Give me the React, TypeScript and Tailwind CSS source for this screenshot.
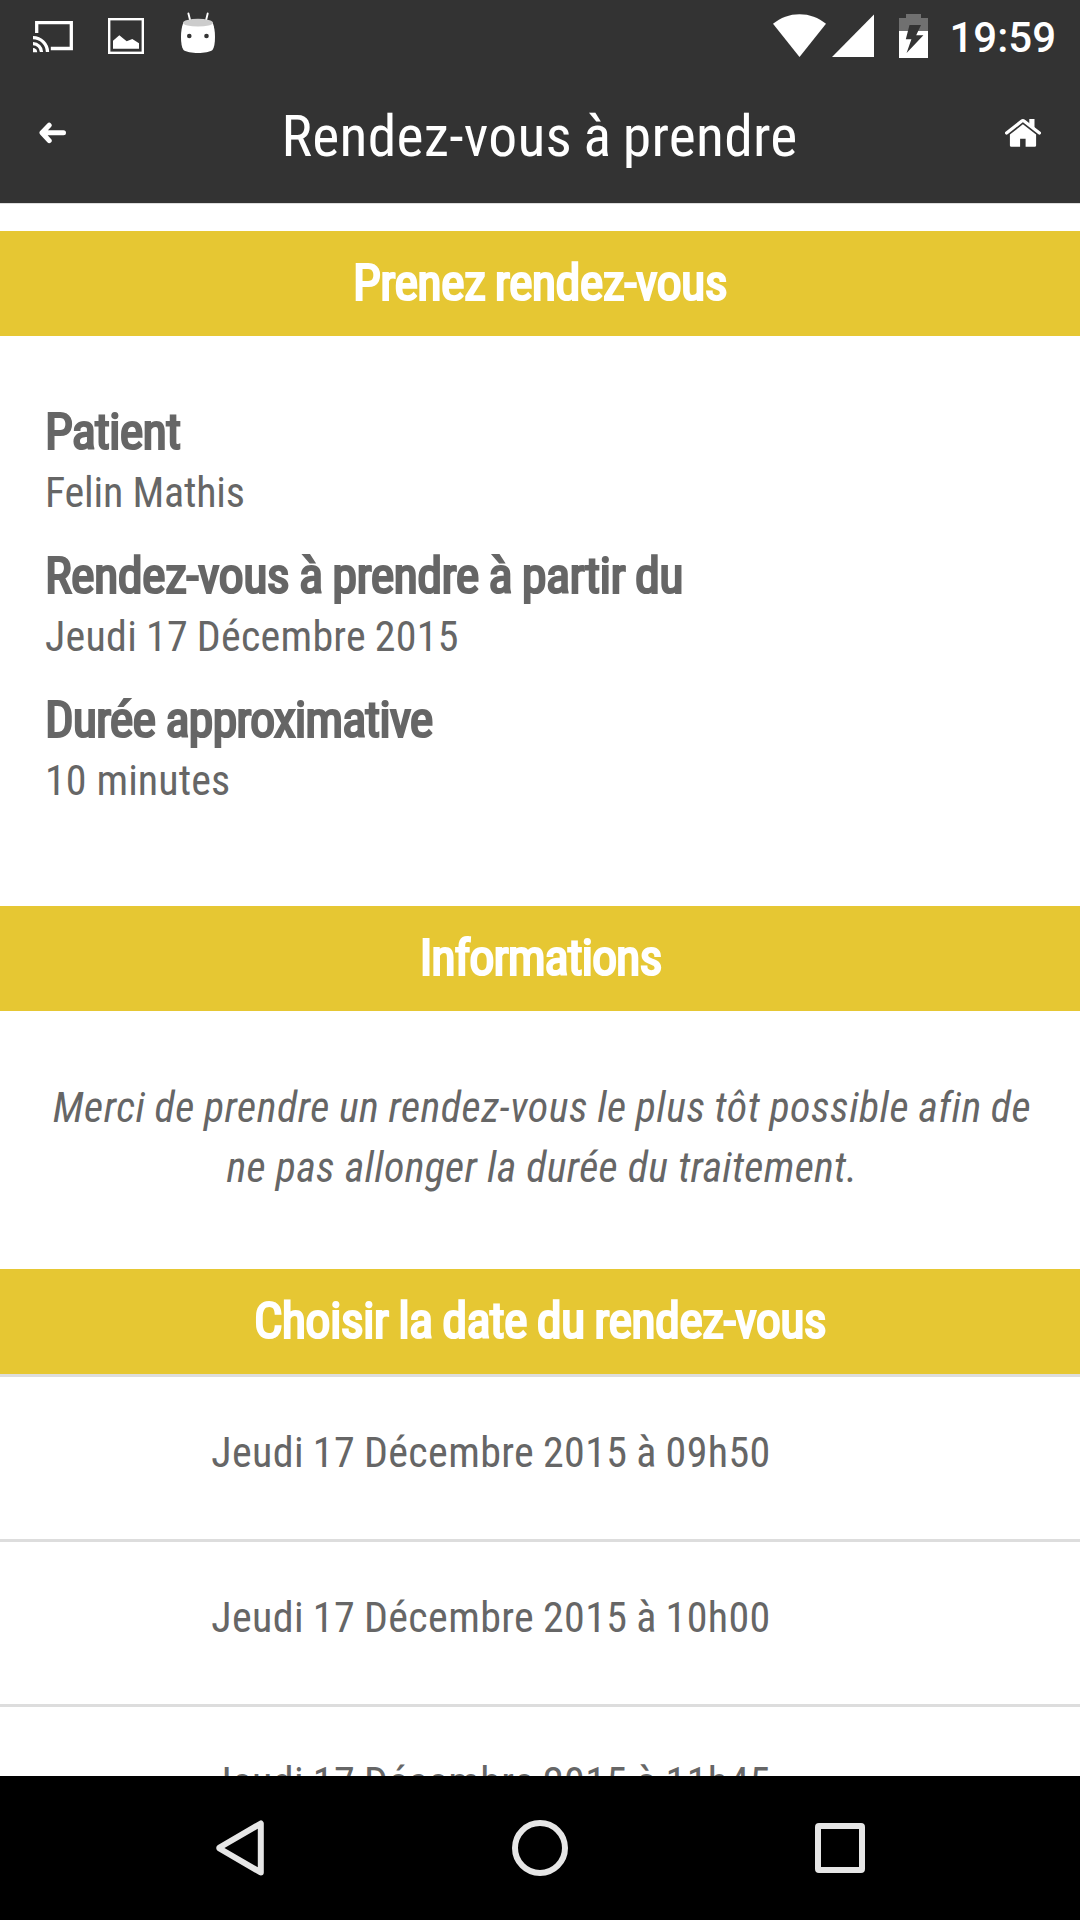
const details = [
  {
    label: "Patient",
    value: "Felin Mathis",
    labelSpacing: "tracking-[-0.86px]",
    valueSpacing: "tracking-[-0.2px]",
  },
  {
    label: "Rendez-vous à prendre à partir du",
    value: "Jeudi 17 Décembre 2015",
    labelSpacing: "tracking-[-0.7px] [word-spacing:-1px]",
    valueSpacing: "tracking-[0.25px] [word-spacing:-1px]",
  },
  {
    label: "Durée approximative",
    value: "10 minutes",
    labelSpacing: "tracking-[-1.05px]",
    valueSpacing: "tracking-[0.1px]",
  },
];

const slots = [
  "Jeudi 17 Décembre 2015 à 09h50",
  "Jeudi 17 Décembre 2015 à 10h00",
  "Jeudi 17 Décembre 2015 à 11h45",
];

const StatusBar = () => (
  <div className="flex h-[60px] items-start justify-between pr-[24px] pl-[33px]">
    <div className="flex items-start">
      <svg className="mt-[21px] h-[32px] w-[40px]" viewBox="0 0 40 32" fill="none" stroke="#fff" strokeWidth="3.3">
        <path d="M3.7 12V1.7h34.6v25.8H17.8" />
        <path d="M0 16.6A14.5 14.5 0 0 1 14.5 31" />
        <path d="M0 22.6A8.5 8.5 0 0 1 8.5 31" />
        <path d="M0 27a4.2 4.2 0 0 1 4.2 4.2H0z" fill="#fff" stroke="none" />
      </svg>
      <svg className="mt-[18px] ml-[35px] h-[36px] w-[36px]" viewBox="0 0 36 36">
        <rect x="1.2" y="1.2" width="33.6" height="33.6" fill="none" stroke="#fff" strokeWidth="2.4" />
        <path d="M5 30.8v-8.1l6.3-5.4 7.4 6 5.6-2.3 6.7 4.3v5.5z" fill="#fff" />
      </svg>
      <svg className="mt-[12px] ml-[37px] h-[42px] w-[34px]" viewBox="0 0 34 42">
        <path d="M7.4 1.5l2.3 9M26.7 1.5l-2.2 9" stroke="#fff" strokeWidth="1.9" strokeLinecap="round" />
        <path
          d="M2.2 11C.6 15 0 20 0 25c0 6 .7 10.5 2.5 13C5 40 11 41 17 41s12-1 14.5-3C33.3 35.5 34 31 34 25c0-5-.6-10-2.2-14z"
          fill="#fff"
        />
        <ellipse cx="17" cy="10.7" rx="15" ry="3.9" fill="#ccc" />
        <circle cx="8.3" cy="24" r="2.3" fill="#333" />
        <circle cx="25.5" cy="24" r="2.3" fill="#333" />
      </svg>
    </div>
    <div className="flex items-start text-white">
      <svg className="mt-[14px] h-[43px] w-[53px]" viewBox="0 0 53 43">
        <path d="M26.5 43L0 9.8C7.5 3.5 16.5.2 26.5.2S45.5 3.5 53 9.8z" fill="#fff" />
      </svg>
      <svg className="mt-[14px] ml-[6px] h-[43px] w-[42px]" viewBox="0 0 42 43">
        <path d="M0 43L42 .5V43z" fill="#fff" />
      </svg>
      <svg className="mt-[14px] ml-[25px] h-[44px] w-[29px]" viewBox="0 0 29 44">
        <path d="M7 0h15v4h7v13H0V4h7z" fill="#707070" />
        <path d="M0 17h29v27H0z" fill="#fff" />
        <path d="M10.5 11H22l-4.8 10.3h7.2L7.6 39l4.8-13.7H6.8z" fill="#333" />
      </svg>
      <span className="mt-[8px] ml-[21px] font-['Roboto',sans-serif] text-[42px] leading-[60px] font-medium">
        19:59
      </span>
    </div>
  </div>
);

const Header = () => (
  <header className="flex h-[143px] items-center justify-between pr-[39px] pl-[38px]">
    <svg className="mt-[2px] h-[22px] w-[36px]" viewBox="0 0 36 22">
      <path
        d="M11.2 3.2L4 10.8l7.2 7.8M5 10.8h20.5"
        fill="none"
        stroke="#fff"
        strokeWidth="5"
        strokeLinecap="round"
        strokeLinejoin="round"
      />
    </svg>
    <h1 className="pt-[10px] text-[57.6px] leading-[68px] font-normal tracking-[0.25px] [word-spacing:-2px] text-white">
      Rendez-vous à prendre
    </h1>
    <svg className="mt-[3px] h-[28px] w-[36px]" viewBox="0 0 36 28">
      <path d="M24.3 0h5.2v10.5l-5.2-4z" fill="#fff" />
      <path
        d="M1.6 14.1L16.5 2.2q1.4-1.1 2.8 0l15.1 11.9"
        fill="none"
        stroke="#fff"
        strokeWidth="3.2"
        strokeLinecap="round"
      />
      <path
        d="M4.9 15.5L17.9 5.3l13.2 10.2v10.9q0 1.4-1.4 1.4h-9.1v-8h-5.5v8H6.3q-1.4 0-1.4-1.4z"
        fill="#fff"
      />
    </svg>
  </header>
);

const SectionTitle = ({ children, spacing }: { children: string; spacing: string }) => (
  <h2
    className={`h-[105px] bg-[#e6c733] text-center text-[50.4px] leading-[103px] font-normal text-white [-webkit-text-stroke:2.2px_#fff] ${spacing}`}
  >
    {children}
  </h2>
);

const NavBar = () => (
  <nav className="flex h-[144px] shrink-0 items-center bg-black pl-[216px]">
    <svg className="h-[56px] w-[48px]" viewBox="0 0 48 56">
      <path d="M44.8 3.5v49L3.5 28.5q-.6-.5 0-1z" fill="none" stroke="#e6e6e6" strokeWidth="6" strokeLinejoin="round" />
    </svg>
    <svg className="ml-[248px] h-[56px] w-[56px]" viewBox="0 0 56 56">
      <circle cx="28" cy="28" r="25" fill="none" stroke="#e6e6e6" strokeWidth="6" />
    </svg>
    <svg className="ml-[247px] h-[50px] w-[50px]" viewBox="0 0 50 50">
      <rect x="3" y="3" width="44" height="44" rx="1" fill="none" stroke="#e6e6e6" strokeWidth="6" />
    </svg>
  </nav>
);

export default function App() {
  return (
    <div className="flex h-[1920px] w-[1080px] flex-col overflow-hidden bg-white font-['Roboto_Condensed',Roboto,sans-serif] text-[42px] leading-[60px] text-[#666]">
      <div className="shrink-0 bg-[#333]">
        <StatusBar />
        <Header />
      </div>

      <main className="min-h-0 flex-1 overflow-hidden border-t border-[#ddd] pt-[27px]">
        <SectionTitle spacing="tracking-[-0.7px] [word-spacing:-1.5px]">Prenez rendez-vous</SectionTitle>
        <dl className="flex h-[570px] flex-col gap-[24px] px-[45px] pt-[67px]">
          {details.map((item) => (
            <div key={item.label}>
              <dt className={`-mt-px mb-px text-[50.4px] [-webkit-text-stroke:2.2px_#666] ${item.labelSpacing}`}>
                {item.label}
              </dt>
              <dd className={item.valueSpacing}>{item.value}</dd>
            </div>
          ))}
        </dl>

        <SectionTitle spacing="tracking-[-1.1px] pl-[1px]">Informations</SectionTitle>
        <p className="h-[258px] pt-[67px] pl-[4px] text-center whitespace-nowrap italic">
          <span className="tracking-[0.5px] [word-spacing:-0.9px]">
            Merci de prendre un rendez-vous le plus tôt possible afin de
          </span>
          <br />
          <span className="tracking-[0.3px]">ne pas allonger la durée du traitement.</span>
        </p>

        <SectionTitle spacing="tracking-[-0.75px] [word-spacing:-1px]">Choisir la date du rendez-vous</SectionTitle>
        <ul>
          {slots.map((slot) => (
            <li
              key={slot}
              className="h-[165px] border-t-[3px] border-[#ddd] pt-[46px] pr-[98px] text-center tracking-[0.38px] [word-spacing:-1.2px]"
            >
              {slot}
            </li>
          ))}
        </ul>
      </main>

      <NavBar />
    </div>
  );
}
